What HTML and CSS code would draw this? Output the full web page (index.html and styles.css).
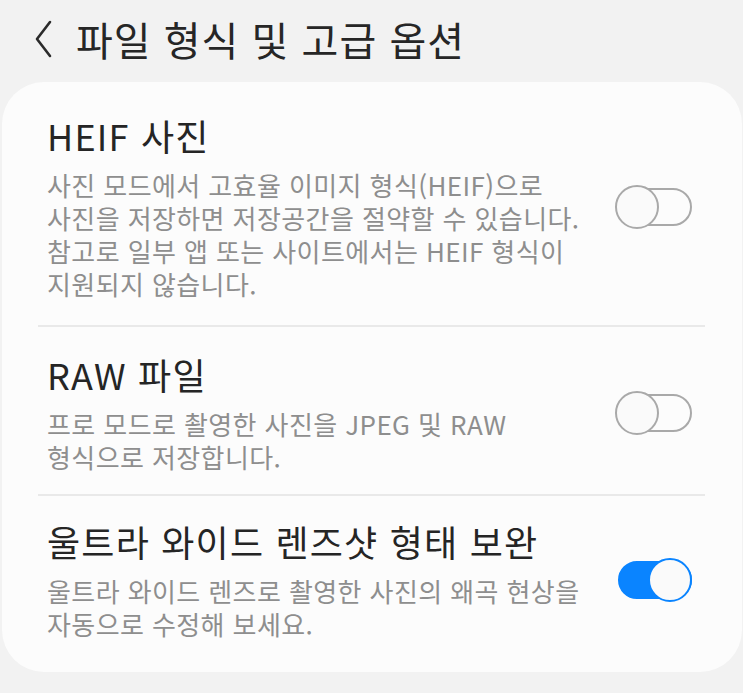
FILE: index.html
```html
<!DOCTYPE html>
<html lang="ko">
<head>
<meta charset="utf-8">
<link rel="stylesheet" href="styles.css">
</head>
<body>
<header class="header">
  <svg class="back" width="20" height="40" viewBox="0 0 20 40"><polyline points="16,3 3,20 16,37" fill="none" stroke="#2b2b2b" stroke-width="2.6" stroke-linecap="round" stroke-linejoin="round"/></svg>
  <h1 class="title">파일 형식 및 고급 옵션</h1>
</header>
<main class="card">
  <section class="item item-heif">
    <div class="text">
      <div class="item-title">HEIF 사진</div>
      <div class="item-desc">사진 모드에서 고효율 이미지 형식(HEIF)으로<br>사진을 저장하면 저장공간을 절약할 수 있습니다.<br>참고로 일부 앱 또는 사이트에서는 HEIF 형식이<br>지원되지 않습니다.</div>
    </div>
    <div class="switch"><span class="knob"></span></div>
  </section>
  <div class="divider"></div>
  <section class="item item-raw">
    <div class="text">
      <div class="item-title">RAW 파일</div>
      <div class="item-desc">프로 모드로 촬영한 사진을 JPEG 및 RAW<br>형식으로 저장합니다.</div>
    </div>
    <div class="switch"><span class="knob"></span></div>
  </section>
  <div class="divider"></div>
  <section class="item item-wide">
    <div class="text">
      <div class="item-title">울트라 와이드 렌즈샷 형태 보완</div>
      <div class="item-desc">울트라 와이드 렌즈로 촬영한 사진의 왜곡 현상을<br>자동으로 수정해 보세요.</div>
    </div>
    <div class="switch on"><span class="knob"></span></div>
  </section>
</main>
</body>
</html>
```
FILE: styles.css
```css
html, body {
  margin: 0;
  padding: 0;
  background: #f2f2f2;
}
body {
  width: 743px;
  height: 693px;
  overflow: hidden;
  font-family: "Noto Sans CJK KR", "Noto Sans", sans-serif;
  color: #252525;
}
.header {
  display: flex;
  align-items: center;
  height: 82px;
  padding-left: 34px;
  box-sizing: border-box;
}
.back {
  display: block;
  margin-top: -4px;
}
.title {
  margin: -4px 0 0 22px;
  font-size: 40px;
  font-weight: 400;
  line-height: 1;
  letter-spacing: 1px;
  color: #262626;
}
.card {
  margin: 0 1px 0 2px;
  height: 590px;
  background: #fcfcfc;
  border-radius: 42px;
  padding: 31px 0 0;
  box-sizing: border-box;
}
.item {
  display: flex;
  align-items: center;
  justify-content: space-between;
  padding: 0 50px 0 45px;
}
.text {
  white-space: nowrap;
}
.item-heif { padding-bottom: 25px; }
.item-raw { padding-top: 25px; padding-bottom: 21px; }
.item-wide { padding-top: 23px; }
.item-title {
  font-size: 36px;
  line-height: 45px;
  letter-spacing: 1.2px;
  color: #252525;
}
.item-desc {
  margin-top: 10px;
  font-size: 26px;
  line-height: 33px;
  letter-spacing: 0.4px;
  color: #8e8e8e;
}
.divider {
  height: 2px;
  background: #e9e9e9;
  margin: 0 37px 0 36px;
}
.switch {
  position: relative;
  width: 70px;
  height: 34px;
  border: 2px solid #a9a9a9;
  border-radius: 20px;
  flex: none;
}
.knob {
  position: absolute;
  left: -5px;
  top: -5px;
  width: 40px;
  height: 40px;
  border: 2px solid #a9a9a9;
  border-radius: 50%;
  background: #fafafa;
}
.switch.on {
  background: #0a84ff;
  border-color: #0a84ff;
}
.switch.on .knob {
  left: auto;
  right: -2px;
  border-color: #0a84ff;
}
```
